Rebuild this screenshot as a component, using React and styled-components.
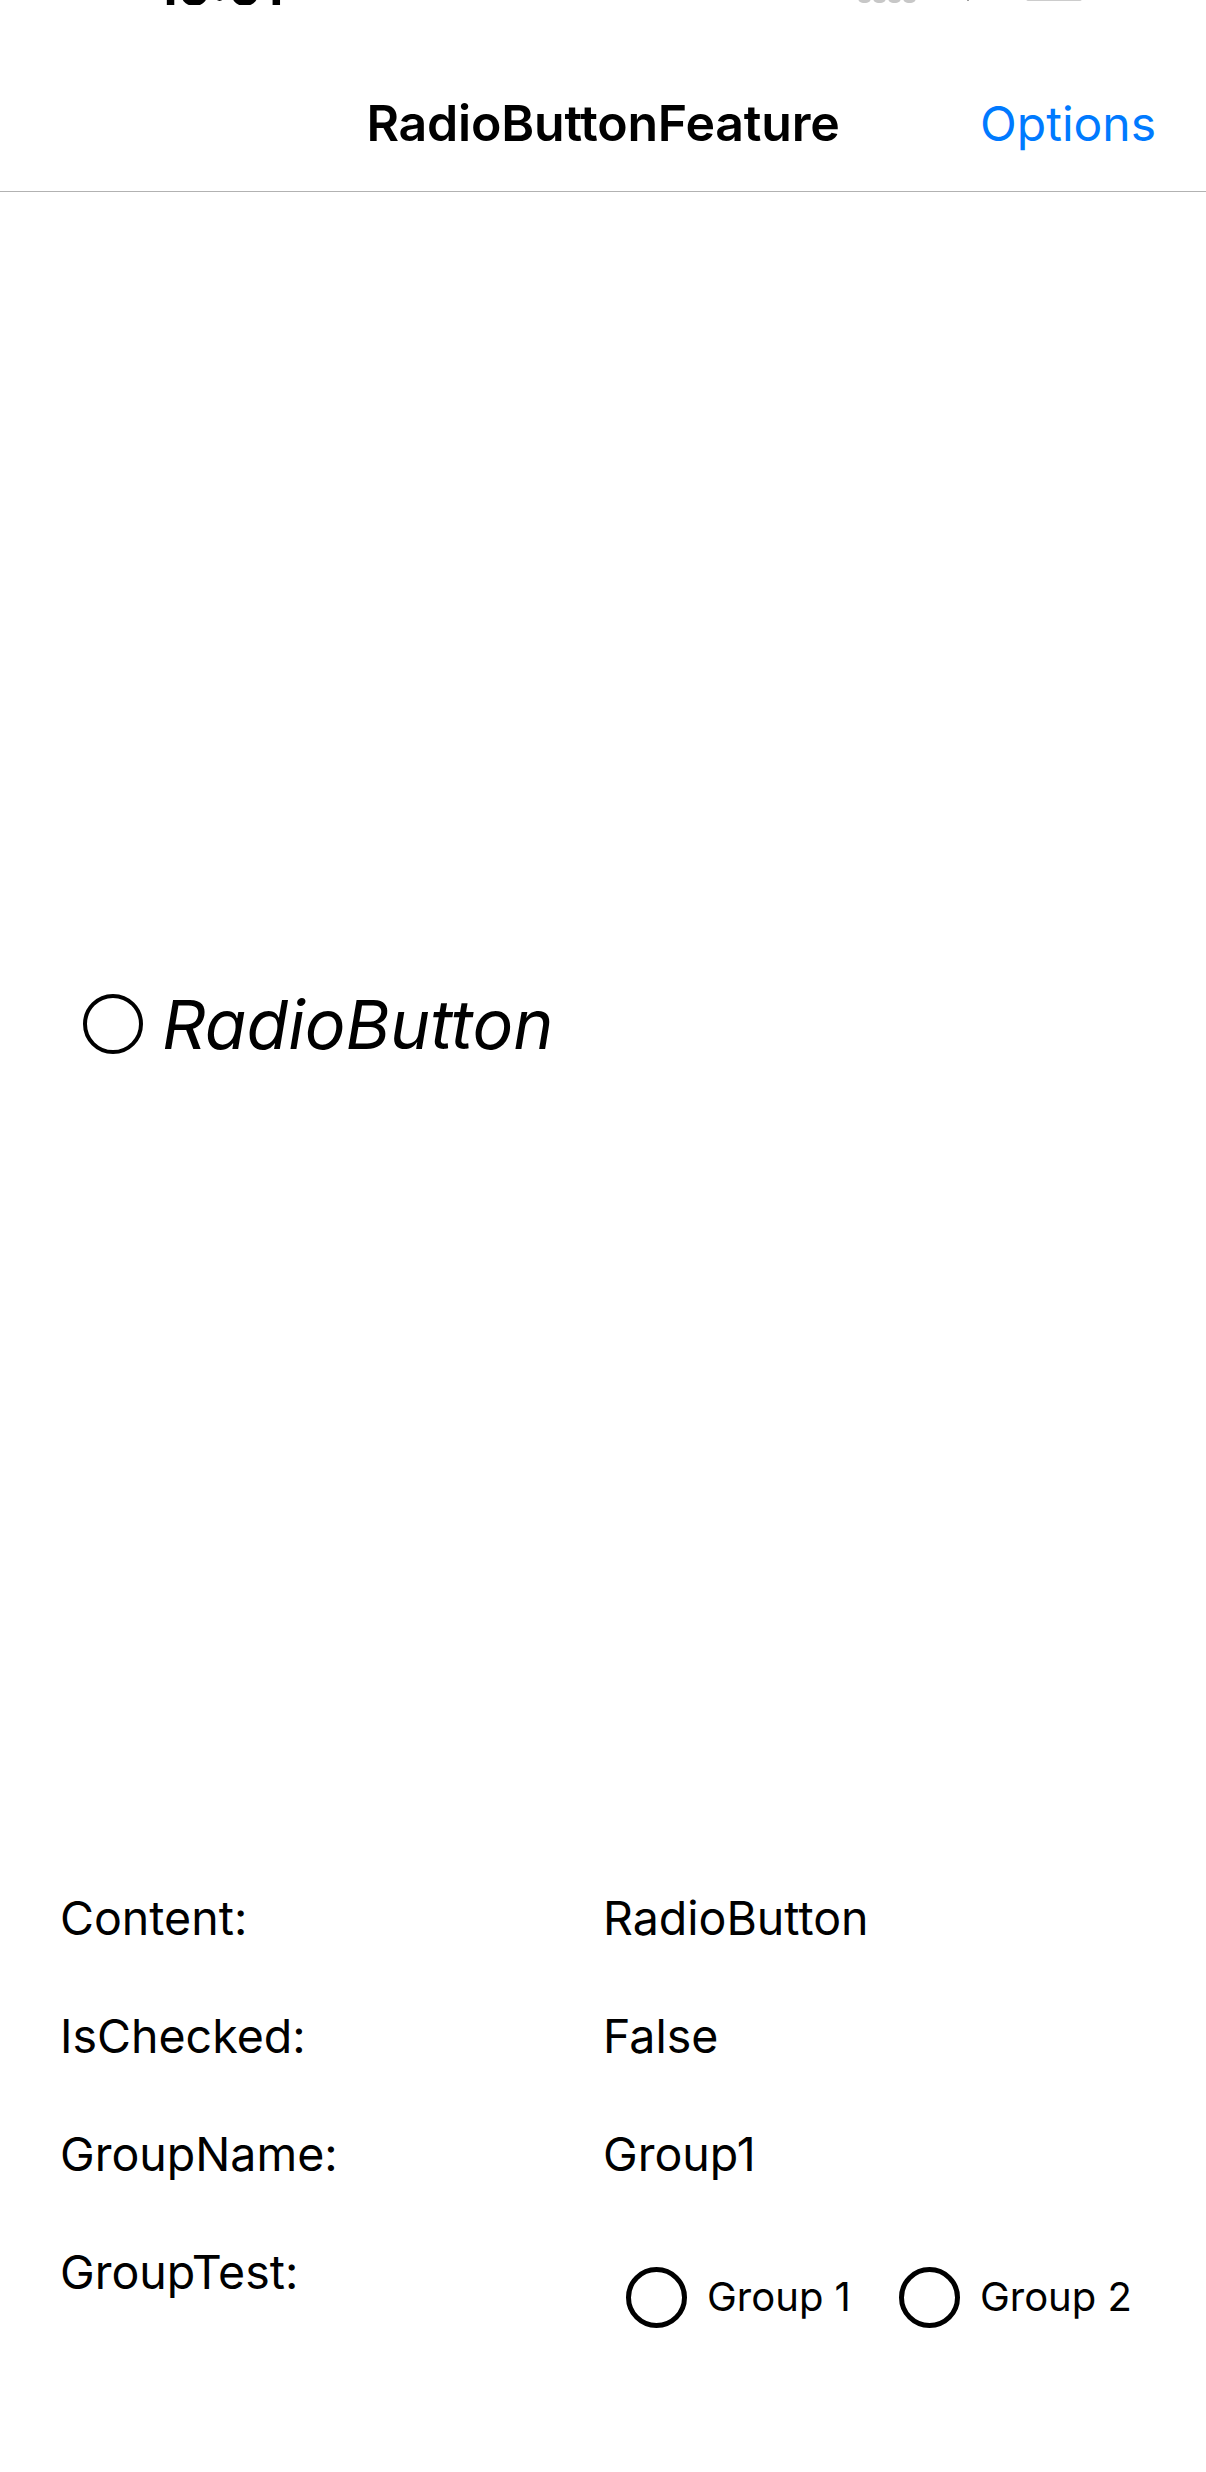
import React from "react";
import styled, { createGlobalStyle } from "styled-components";

const GlobalStyle = createGlobalStyle`
  body {
    margin: 0;
    background: #ffffff;
    font-family: Inter, "Noto Sans", "Liberation Sans", sans-serif;
    color: #000000;
  }
`;

const Screen = styled.div`
  width: 1206px;
  height: 2472px;
  display: flex;
  flex-direction: column;
  background: #ffffff;
  overflow: hidden;
`;

// status bar, scrolled mostly out of view: only the bottom few pixels show
const StatusBar = styled.div`
  height: 5px;
  flex: none;
  display: flex;
  align-items: flex-end;
  overflow: hidden;
  padding: 0 116px 0 156px;
`;

const Time = styled.span`
  font-size: 50px;
  font-weight: 700;
  line-height: 50px;
  margin-bottom: -8px;
`;

const StatusIcons = styled.div`
  margin-left: auto;
  display: flex;
  align-items: flex-end;
  gap: 44px;
`;

const NavBar = styled.div`
  height: 136px;
  flex: none;
  padding: 50px 50px 0;
  display: grid;
  grid-template-columns: 1fr auto 1fr;
  align-items: center;
  border-bottom: 1px solid #b2b2b2;
`;

const Title = styled.div`
  grid-column: 2;
  font-size: 50px;
  font-weight: 600;
  letter-spacing: -0.2px;
`;

const NavAction = styled.div`
  justify-self: end;
  font-size: 48px;
  color: #007aff;
`;

const Demo = styled.div`
  height: 1663px;
  flex: none;
  display: flex;
  align-items: center;
  padding-left: 83px;
`;

const Radio = styled.div`
  display: flex;
  align-items: center;
  gap: ${(p) => p.$gap}px;
`;

const Circle = styled.span`
  box-sizing: border-box;
  flex: none;
  width: ${(p) => p.$size}px;
  height: ${(p) => p.$size}px;
  border-radius: 50%;
  border: ${(p) => p.$stroke}px solid #000000;
`;

const BigLabel = styled.span`
  font-size: 68px;
  font-style: italic;
  line-height: 1;
`;

const Properties = styled.div`
  display: grid;
  grid-template-columns: 543px 1fr;
  grid-auto-rows: 118px;
  align-items: center;
  padding: 4px 0 0 60px;
`;

const Label = styled.div`
  font-size: 46.5px;
`;

const Value = styled.div`
  font-size: 46.5px;
`;

const GroupTest = styled.div`
  display: flex;
  align-items: center;
  gap: 48px;
  padding: 50px 0 0 23px;
`;

const SmallLabel = styled.span`
  font-size: 40px;
  line-height: 1;
`;

function Cellular() {
  return (
    <svg width="60" height="12" viewBox="0 0 60 12">
      {[0, 15, 30, 45].map((x) => (
        <rect key={x} x={x} y="-10" width="13" height="20" rx="5" fill="#c7c7c7" />
      ))}
    </svg>
  );
}

function Wifi() {
  return (
    <svg width="12" height="12" viewBox="0 0 12 12">
      <path d="M0 0 L12 0 L6 8 Z" fill="#000" />
    </svg>
  );
}

function Battery() {
  return (
    <svg width="72" height="12" viewBox="0 0 72 12">
      <rect x="1.5" y="-20" width="69" height="26" rx="10" fill="none" stroke="#9a9a9a" strokeWidth="3" />
    </svg>
  );
}

const rows = [
  ["Content:", "RadioButton"],
  ["IsChecked:", "False"],
  ["GroupName:", "Group1"],
];

export default function App() {
  return (
    <>
      <GlobalStyle />
      <Screen>
        <StatusBar>
          <Time>10:01</Time>
          <StatusIcons>
            <Cellular />
            <Wifi />
            <Battery />
          </StatusIcons>
        </StatusBar>
        <NavBar>
          <Title>RadioButtonFeature</Title>
          <NavAction>Options</NavAction>
        </NavBar>
        <Demo>
          <Radio $gap={19}>
            <Circle $size={60} $stroke={4} />
            <BigLabel>RadioButton</BigLabel>
          </Radio>
        </Demo>
        <Properties>
          {rows.map(([label, value]) => (
            <React.Fragment key={label}>
              <Label>{label}</Label>
              <Value>{value}</Value>
            </React.Fragment>
          ))}
          <Label>GroupTest:</Label>
          <GroupTest>
            <Radio $gap={20}>
              <Circle $size={61} $stroke={5} />
              <SmallLabel>Group 1</SmallLabel>
            </Radio>
            <Radio $gap={20}>
              <Circle $size={61} $stroke={5} />
              <SmallLabel>Group 2</SmallLabel>
            </Radio>
          </GroupTest>
        </Properties>
      </Screen>
    </>
  );
}
